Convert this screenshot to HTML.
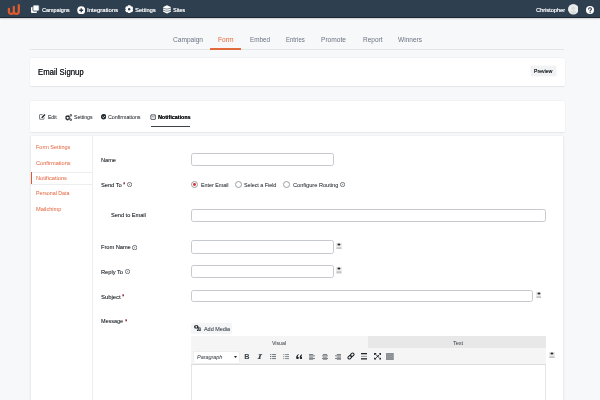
<!DOCTYPE html>
<html><head><meta charset="utf-8"><style>
*{margin:0;padding:0;box-sizing:border-box}
html,body{width:600px;height:400px;overflow:hidden;background:#f7f8fa;font-family:"Liberation Sans",sans-serif;position:relative}
#root{position:absolute;left:0;top:0;width:600px;height:400px;will-change:transform;overflow:hidden;filter:blur(0.2px)}
.a{position:absolute;white-space:nowrap;line-height:1}
#nav{position:absolute;left:0;top:0;width:600px;height:18.2px;background:#2e3f4f;border-bottom:1.1px solid #1b2432;box-shadow:0 0.6px 1.2px rgba(0,0,0,.18)}
.nt{color:#eef0f2;text-shadow:0.15px 0 0 #eef0f2}
.st{color:#6b7380}
.st.on{color:#e4683a}
.es{color:#1d2327;text-shadow:0.1px 0 0 #1d2327}
.pv{color:#1d2327;text-shadow:0.12px 0 0 #1d2327}
.card{position:absolute;background:#fff;border-radius:1.5px;box-shadow:0 0 0 0.4px rgba(0,0,0,.04),0 0.6px 1.2px rgba(0,0,0,.06)}
.tt{color:#2c3338;text-shadow:0.2px 0 0 rgba(44,51,56,.3)}
.tt.b{color:#101517;font-weight:bold;text-shadow:0.2px 0 0 #101517}
.sb{color:#e2623a}
.lb{color:#1d2327;text-shadow:0.2px 0 0 rgba(29,35,39,.45)}
.req{color:#b32d2e}
.inp{position:absolute;border:1.15px solid #c6c9cd;border-radius:2.5px;background:#fff}
.rl{color:#2c3338;text-shadow:0.2px 0 0 rgba(44,51,56,.3)}
.radio{position:absolute;width:7px;height:7px;border:0.9px solid #9a9da1;border-radius:50%;background:#fff}
</style></head><body><div id="root">
<div id="nav"></div>
<svg class="a" style="left:0;top:0" width="30" height="18" viewBox="0 0 30 18">
<path d="M8.9 9V11.2Q8.9 13.85 11.35 13.85Q13.8 13.85 13.8 11.2V7 M13.8 11.2Q13.8 13.85 16.3 13.85Q18.8 13.85 18.8 11.2V5.2" fill="none" stroke="#dd5a2c" stroke-width="2.3" stroke-linecap="round" stroke-linejoin="round"/></svg>
<svg class="a" style="left:31.4px;top:5.4px" width="8.2" height="8" viewBox="0 0 8.2 8">
<rect x="0" y="2" width="6" height="6" rx="0.9" fill="#fff"/>
<rect x="1.9" y="0" width="6.3" height="6.1" rx="1" fill="#fff" stroke="#2e3f4f" stroke-width="0.8"/></svg>
<div class="a nt" style="left:41.70px;top:7.99px;font-size:5.600px;transform:scaleX(0.9709);transform-origin:0 0;">Campaigns</div>
<svg class="a" style="left:76.5px;top:5.8px" width="8.5" height="8.5" viewBox="0 0 8.5 8.5">
<circle cx="4.25" cy="4.25" r="4" fill="#fff"/><path d="M4.25 2.3V6.2M2.3 4.25H6.2" stroke="#2c3a4a" stroke-width="1.3"/></svg>
<div class="a nt" style="left:87.00px;top:7.99px;font-size:5.600px;transform:scaleX(1.0593);transform-origin:0 0;">Integrations</div>
<svg class="a" style="left:124.5px;top:4.8px" width="8.4" height="8.4" viewBox="0 0 10 10">
<path fill="#fff" fill-rule="evenodd" d="M6.91 8.40 L6.45 9.78 L3.55 9.78 L3.09 8.40 L3.01 8.35 L1.58 8.65 L0.13 6.14 L1.10 5.05 L1.10 4.95 L0.13 3.86 L1.58 1.35 L3.01 1.65 L3.09 1.60 L3.55 0.22 L6.45 0.22 L6.91 1.60 L6.99 1.65 L8.42 1.35 L9.87 3.86 L8.90 4.95 L8.90 5.05 L9.87 6.14 L8.42 8.65 L6.99 8.35Z M6.5 5A1.5 1.5 0 1 0 3.5 5A1.5 1.5 0 1 0 6.5 5Z"/></svg>
<div class="a nt" style="left:135.20px;top:7.99px;font-size:5.600px;transform:scaleX(1.0181);transform-origin:0 0;">Settings</div>
<svg class="a" style="left:162.8px;top:4.9px" width="8" height="8.8" viewBox="0 0 8 8.8">
<path d="M4 0.2L7.8 2V6.8L4 8.6L0.2 6.8V2Z" fill="#fff"/>
<path d="M0.2 3.2Q4 5.2 7.8 3.2M0.2 5.3Q4 7.3 7.8 5.3" fill="none" stroke="#2e3f4f" stroke-width="0.6"/></svg>
<div class="a nt" style="left:172.50px;top:7.99px;font-size:5.600px;transform:scaleX(0.9720);transform-origin:0 0;">Sites</div>
<div class="a nt" style="left:535.80px;top:7.99px;font-size:5.600px;transform:scaleX(1.0053);transform-origin:0 0;">Christopher</div>
<svg class="a" style="left:567.6px;top:4px" width="10.6" height="10.6" viewBox="0 0 10 10">
<circle cx="5" cy="5" r="5" fill="#ebecec"/><circle cx="5" cy="3.9" r="1.8" fill="#dcdede"/><path d="M1.9 8.4Q2.6 5.9 5 5.9Q7.4 5.9 8.1 8.4Q5 10.6 1.9 8.4Z" fill="#dcdede"/></svg>
<svg class="a" style="left:585.6px;top:5.5px" width="8" height="8" viewBox="0 0 10 10">
<circle cx="5" cy="5" r="5" fill="#fff"/><path d="M3.3 3.9Q3.3 2.2 5 2.2Q6.8 2.2 6.8 3.8Q6.8 4.8 5.7 5.3Q5.1 5.6 5.1 6.2" fill="none" stroke="#2a3542" stroke-width="1.35" stroke-linecap="round"/><circle cx="5.1" cy="7.9" r="0.8" fill="#2a3542"/></svg>
<div class="a st" style="left:173.00px;top:36.34px;font-size:7.000px;transform:scaleX(0.9403);transform-origin:0 0;">Campaign</div>
<div class="a st on" style="left:218.00px;top:36.34px;font-size:7.000px;transform:scaleX(0.9491);transform-origin:0 0;">Form</div>
<div class="a st" style="left:249.50px;top:36.34px;font-size:7.000px;transform:scaleX(0.9019);transform-origin:0 0;">Embed</div>
<div class="a st" style="left:286.25px;top:36.34px;font-size:7.000px;transform:scaleX(0.8607);transform-origin:0 0;">Entries</div>
<div class="a st" style="left:321.25px;top:36.34px;font-size:7.000px;transform:scaleX(0.9451);transform-origin:0 0;">Promote</div>
<div class="a st" style="left:362.50px;top:36.34px;font-size:7.000px;transform:scaleX(0.9283);transform-origin:0 0;">Report</div>
<div class="a st" style="left:398.00px;top:36.34px;font-size:7.000px;transform:scaleX(0.9347);transform-origin:0 0;">Winners</div>
<div class="a" style="left:30px;top:48.6px;width:534px;height:1px;background:#e4e6e9"></div>
<div class="a" style="left:210.3px;top:48px;width:31px;height:1.7px;background:#e36a3c"></div>
<div class="card" style="left:30px;top:57.5px;width:535px;height:28px"></div>
<div class="a es" style="left:38.30px;top:69.10px;font-size:8.144px;transform:scaleX(0.9524);transform-origin:0 0;">Email Signup</div>
<div class="a" style="left:530.6px;top:66px;width:25.4px;height:10.3px;background:#f1f2f3;border-radius:1.5px;box-shadow:0 0 0 0.3px #e6e7e9"></div>
<div class="a pv" style="left:534.00px;top:69.13px;font-size:5.300px;transform:scaleX(0.9699);transform-origin:0 0;">Preview</div>
<div class="card" style="left:30px;top:101px;width:535px;height:30.5px"></div>
<div class="a tt" style="left:48.00px;top:115.30px;font-size:5.800px;transform:scaleX(0.8706);transform-origin:0 0;">Edit</div>
<div class="a tt" style="left:74.00px;top:115.30px;font-size:5.800px;transform:scaleX(0.8828);transform-origin:0 0;">Settings</div>
<div class="a tt" style="left:107.50px;top:115.30px;font-size:5.800px;transform:scaleX(0.9083);transform-origin:0 0;">Confirmations</div>
<div class="a tt b" style="left:157.50px;top:115.39px;font-size:5.600px;transform:scaleX(0.9583);transform-origin:0 0;">Notifications</div>
<div class="a" style="left:150.8px;top:125.8px;width:39.2px;height:1.5px;background:#3c434a"></div>
<svg class="a" style="left:38.6px;top:114.2px" width="7.4" height="5.8" viewBox="0 0 13 10">
<path d="M6.5 1H1.6a.7.7 0 0 0-.7.7V8.4a.7.7 0 0 0 .7.7H8.2a.7.7 0 0 0 .7-.7V6" fill="none" stroke="#50575e" stroke-width="1.3"/>
<path d="M4.2 6.9L4.6 5.2L9.8 0L11.4 1.6L6.2 6.8Z" fill="#1d2327"/></svg>
<svg class="a" style="left:64.8px;top:113.9px" width="7.6" height="7" viewBox="0 0 15 14">
<circle cx="5.2" cy="7.6" r="3.3" fill="none" stroke="#1d2327" stroke-width="2.2"/>
<circle cx="5.2" cy="7.6" r="4.6" fill="none" stroke="#1d2327" stroke-width="1.6" stroke-dasharray="1.6 1.3"/>
<circle cx="11.6" cy="2.6" r="1.7" fill="none" stroke="#1d2327" stroke-width="1.6"/>
<circle cx="11.6" cy="11.4" r="1.7" fill="none" stroke="#1d2327" stroke-width="1.6"/></svg>
<svg class="a" style="left:101px;top:114.3px" width="5.4" height="5.4" viewBox="0 0 10 10">
<circle cx="5" cy="5" r="5" fill="#23282d"/><path d="M2.6 5.2L4.3 6.8L7.4 3.5" fill="none" stroke="#fff" stroke-width="1.5"/></svg>
<svg class="a" style="left:150px;top:114px" width="6" height="6" viewBox="0 0 6 6">
<rect x="0.85" y="0.85" width="4.5" height="4.5" rx="0.3" fill="none" stroke="#3c434a" stroke-width="0.85"/><path d="M1.6 1.9L3.1 3.2L4.6 1.9" fill="none" stroke="#3c434a" stroke-width="0.6"/></svg>
<div class="card" style="left:30px;top:135.5px;width:534px;height:270px"></div>
<div class="a" style="left:30px;top:135.5px;width:1.4px;height:270px;background:#eceef0"></div>
<div class="a" style="left:92px;top:135.5px;width:1.4px;height:270px;background:#eceef0"></div>
<div class="a" style="left:563px;top:135.5px;width:1px;height:270px;background:#eceef0"></div>
<div class="a" style="left:31.4px;top:171.5px;width:60.6px;height:1px;background:#eceef0"></div>
<div class="a" style="left:31.4px;top:184.3px;width:60.6px;height:1px;background:#eceef0"></div>
<div class="a" style="left:31px;top:171.7px;width:1.4px;height:12.6px;background:#e5572e"></div>
<div class="a sb" style="left:36.00px;top:144.06px;font-size:6.100px;transform:scaleX(0.9034);transform-origin:0 0;">Form Settings</div>
<div class="a sb" style="left:36.00px;top:160.36px;font-size:6.100px;transform:scaleX(0.9221);transform-origin:0 0;">Confirmations</div>
<div class="a sb" style="left:36.00px;top:175.36px;font-size:6.100px;transform:scaleX(0.9330);transform-origin:0 0;">Notifications</div>
<div class="a sb" style="left:36.00px;top:190.26px;font-size:6.100px;transform:scaleX(0.8665);transform-origin:0 0;">Personal Data</div>
<div class="a sb" style="left:36.00px;top:206.16px;font-size:6.100px;transform:scaleX(0.9288);transform-origin:0 0;">Mailchimp</div>
<div class="a lb" style="left:101.30px;top:158.25px;font-size:5.900px;transform:scaleX(0.9466);transform-origin:0 0;">Name</div>
<div class="a lb" style="left:101.20px;top:182.65px;font-size:5.900px;transform:scaleX(0.9656);transform-origin:0 0;">Send To</div>
<div class="a lb" style="left:110.60px;top:213.05px;font-size:5.900px;transform:scaleX(0.9474);transform-origin:0 0;">Send to Email</div>
<div class="a lb" style="left:101.00px;top:244.65px;font-size:5.900px;transform:scaleX(0.9570);transform-origin:0 0;">From Name</div>
<div class="a lb" style="left:101.00px;top:269.55px;font-size:5.900px;transform:scaleX(0.9628);transform-origin:0 0;">Reply To</div>
<div class="a lb" style="left:101.00px;top:294.95px;font-size:5.900px;transform:scaleX(0.9961);transform-origin:0 0;">Subject</div>
<div class="a lb" style="left:101.00px;top:319.45px;font-size:5.900px;transform:scaleX(0.9189);transform-origin:0 0;">Message</div>
<svg class="a" style="left:122.70px;top:182.20px" width="2.6" height="2.6" viewBox="0 0 10 10"><path d="M5 0.5V9.5M1.1 2.75L8.9 7.25M8.9 2.75L1.1 7.25" stroke="#8a2430" stroke-width="2.6"/></svg>
<svg class="a" style="left:121.80px;top:294.40px" width="2.6" height="2.6" viewBox="0 0 10 10"><path d="M5 0.5V9.5M1.1 2.75L8.9 7.25M8.9 2.75L1.1 7.25" stroke="#8a2430" stroke-width="2.6"/></svg>
<svg class="a" style="left:124.80px;top:319.40px" width="2.6" height="2.6" viewBox="0 0 10 10"><path d="M5 0.5V9.5M1.1 2.75L8.9 7.25M8.9 2.75L1.1 7.25" stroke="#8a2430" stroke-width="2.6"/></svg>
<svg class="a" style="left:126.95px;top:181.95px" width="5.1" height="5.1" viewBox="0 0 10 10"><circle cx="5" cy="5" r="4.25" fill="none" stroke="#50575e" stroke-width="1.5"/><path d="M4.2 3L6.6 5L4.2 7Z" fill="#8c8f94"/></svg>
<svg class="a" style="left:132.15px;top:244.55px" width="5.3" height="5.3" viewBox="0 0 10 10"><circle cx="5" cy="5" r="4.25" fill="none" stroke="#50575e" stroke-width="1.5"/><path d="M4.2 3L6.6 5L4.2 7Z" fill="#8c8f94"/></svg>
<svg class="a" style="left:124.55px;top:269.15px" width="5.1" height="5.1" viewBox="0 0 10 10"><circle cx="5" cy="5" r="4.25" fill="none" stroke="#50575e" stroke-width="1.5"/><path d="M4.2 3L6.6 5L4.2 7Z" fill="#8c8f94"/></svg>
<svg class="a" style="left:339.95px;top:181.85px" width="5.1" height="5.1" viewBox="0 0 10 10"><circle cx="5" cy="5" r="4.25" fill="none" stroke="#50575e" stroke-width="1.5"/><path d="M4.2 3L6.6 5L4.2 7Z" fill="#8c8f94"/></svg>
<div class="inp" style="left:191px;top:153.4px;width:142.5px;height:12.400000000000006px"></div>
<div class="inp" style="left:191px;top:209.4px;width:355.4px;height:12.199999999999989px"></div>
<div class="inp" style="left:191px;top:240.3px;width:143px;height:13.299999999999983px"></div>
<div class="inp" style="left:191px;top:265px;width:143px;height:13px"></div>
<div class="inp" style="left:191px;top:289.5px;width:342.29999999999995px;height:12.5px"></div>
<div class="radio" style="left:191.00px;top:181.10px"></div>
<div class="a" style="left:193.10px;top:183.20px;width:2.8px;height:2.8px;border-radius:50%;background:#d63638"></div>
<div class="a rl" style="left:201.00px;top:181.90px;font-size:6.000px;transform:scaleX(0.8867);transform-origin:0 0;">Enter Email</div>
<div class="radio" style="left:235.00px;top:181.30px"></div>
<div class="a rl" style="left:244.20px;top:181.90px;font-size:6.000px;transform:scaleX(0.8885);transform-origin:0 0;">Select a Field</div>
<div class="radio" style="left:283.00px;top:181.30px"></div>
<div class="a rl" style="left:293.00px;top:181.90px;font-size:6.000px;transform:scaleX(0.9366);transform-origin:0 0;">Configure Routing</div>
<svg class="a" style="left:336.1px;top:242.8px" width="5.9" height="6.6" viewBox="0 0 10 11.5"><rect x="0" y="0" width="10" height="5.2" fill="#e4e4e4"/><ellipse cx="5" cy="2.7" rx="2.5" ry="1.7" fill="#23282d"/><rect x="0" y="5.2" width="10" height="6.3" fill="#ededed"/><rect x="0.8" y="7.0" width="8.4" height="1.1" fill="#bdbfc2"/><rect x="0.8" y="9.4" width="8.4" height="1.4" fill="#a9acaf"/></svg>
<svg class="a" style="left:336.1px;top:267.1px" width="5.9" height="6.6" viewBox="0 0 10 11.5"><rect x="0" y="0" width="10" height="5.2" fill="#e4e4e4"/><ellipse cx="5" cy="2.7" rx="2.5" ry="1.7" fill="#23282d"/><rect x="0" y="5.2" width="10" height="6.3" fill="#ededed"/><rect x="0.8" y="7.0" width="8.4" height="1.1" fill="#bdbfc2"/><rect x="0.8" y="9.4" width="8.4" height="1.4" fill="#a9acaf"/></svg>
<svg class="a" style="left:535.6px;top:291.8px" width="5.9" height="6.6" viewBox="0 0 10 11.5"><rect x="0" y="0" width="10" height="5.2" fill="#e4e4e4"/><ellipse cx="5" cy="2.7" rx="2.5" ry="1.7" fill="#23282d"/><rect x="0" y="5.2" width="10" height="6.3" fill="#ededed"/><rect x="0.8" y="7.0" width="8.4" height="1.1" fill="#bdbfc2"/><rect x="0.8" y="9.4" width="8.4" height="1.4" fill="#a9acaf"/></svg>
<svg class="a" style="left:549.4px;top:351.5px" width="5.9" height="6.6" viewBox="0 0 10 11.5"><rect x="0" y="0" width="10" height="5.2" fill="#e4e4e4"/><ellipse cx="5" cy="2.7" rx="2.5" ry="1.7" fill="#23282d"/><rect x="0" y="5.2" width="10" height="6.3" fill="#ededed"/><rect x="0.8" y="7.0" width="8.4" height="1.1" fill="#bdbfc2"/><rect x="0.8" y="9.4" width="8.4" height="1.4" fill="#a9acaf"/></svg>
<div class="a" style="left:191.2px;top:323.3px;width:41.3px;height:10.3px;background:#f3f5f6;border-radius:1.5px"></div>
<svg class="a" style="left:193.7px;top:325.3px" width="7" height="6.2" viewBox="0 0 11 10">
<path d="M0.3 2.2Q0.3 0.3 2.2 0.3H5Q6.9 0.3 6.9 2.2V5.6H2.2Q0.3 5.6 0.3 3.7Z" fill="#1d2327"/><circle cx="3.5" cy="3" r="1.4" fill="#f3f5f6"/>
<path d="M6.2 4H10.4V8.6H9.2V5.2H7.4V8.8H6.2Z" fill="#1d2327"/>
<circle cx="5.8" cy="8.7" r="1.25" fill="#1d2327"/><circle cx="9.4" cy="8.6" r="1.25" fill="#1d2327"/></svg>
<div class="a rl" style="left:204.00px;top:326.75px;font-size:5.900px;transform:scaleX(0.9215);transform-origin:0 0;color:#3c434a">Add Media</div>
<div class="a" style="left:191px;top:336.4px;width:355px;height:70px;border:1px solid #e4e6e8;background:#fff"></div>
<div class="a" style="left:191px;top:336.4px;width:177px;height:11.5px;background:#f5f5f5"></div>
<div class="a" style="left:368px;top:336.4px;width:178px;height:11.5px;background:#e8e8e8"></div>
<div class="a" style="left:191px;top:347.9px;width:355px;height:17.2px;background:#f5f5f5;border-bottom:1px solid #dcdcde"></div>
<div class="a rl" style="left:272.40px;top:341.09px;font-size:5.600px;transform:scaleX(0.9239);transform-origin:0 0;color:#50575e">Visual</div>
<div class="a rl" style="left:452.60px;top:341.09px;font-size:5.600px;transform:scaleX(0.9737);transform-origin:0 0;color:#50575e">Text</div>
<div class="a" style="left:193.7px;top:351.8px;width:45.5px;height:10.9px;background:#fff;box-shadow:0 0 0 0.4px #e4e5e7"></div>
<div class="a rl" style="left:197.20px;top:354.10px;font-size:6.000px;transform:scaleX(0.9065);transform-origin:0 0;color:#50575e;font-style:italic">Paragraph</div>
<svg class="a" style="left:233.5px;top:355.8px" width="3" height="2.2" viewBox="0 0 3 2"><path d="M0 0H3L1.5 2Z" fill="#23282d"/></svg>
<div class="a" style="left:244.3px;top:353.4px;font-size:7.3px;font-weight:bold;color:#3c434a">B</div>
<svg class="a" style="left:257px;top:353.9px" width="5.6" height="5.6" viewBox="0 0 10 10">
<path d="M3.2 0.4H9.4L9.1 1.9H7.5L5.4 8.1H7L6.7 9.6H0.6L0.9 8.1H2.5L4.6 1.9H3Z" fill="#3c434a"/></svg>
<svg class="a" style="left:270px;top:354px" width="6" height="6" viewBox="0 0 6 6"><rect x="0" y="0" width="1.3" height="1.1" fill="#7b8086"/><rect x="2.1" y="0" width="3.9" height="1.1" fill="#7b8086"/><rect x="0" y="2" width="1.3" height="1.1" fill="#7b8086"/><rect x="2.1" y="2" width="3.9" height="1.1" fill="#7b8086"/><rect x="0" y="4" width="1.3" height="1.1" fill="#7b8086"/><rect x="2.1" y="4" width="3.9" height="1.1" fill="#7b8086"/></svg>
<svg class="a" style="left:283.2px;top:354px" width="6" height="6" viewBox="0 0 6 6"><rect x="0" y="0" width="1.3" height="1.1" fill="#a4a8ac"/><rect x="2.1" y="0" width="3.9" height="1.1" fill="#8d9196"/><rect x="0" y="2" width="1.3" height="1.1" fill="#a4a8ac"/><rect x="2.1" y="2" width="3.9" height="1.1" fill="#8d9196"/><rect x="0" y="4" width="1.3" height="1.1" fill="#a4a8ac"/><rect x="2.1" y="4" width="3.9" height="1.1" fill="#8d9196"/></svg>
<svg class="a" style="left:295.9px;top:353.9px" width="6.6" height="5.3" viewBox="0 0 13 10.4">
<path d="M5.4 0.3C2.4 1.2 0.3 3.6 0.3 6.9C0.3 9.1 1.5 10.2 3 10.2C4.4 10.2 5.5 9.2 5.5 7.8C5.5 6.4 4.5 5.6 3.3 5.6C3.4 3.8 4.4 2.4 6 1.6Z M12.4 0.3C9.4 1.2 7.3 3.6 7.3 6.9C7.3 9.1 8.5 10.2 10 10.2C11.4 10.2 12.5 9.2 12.5 7.8C12.5 6.4 11.5 5.6 10.3 5.6C10.4 3.8 11.4 2.4 13 1.6Z" fill="#1d2327"/></svg>
<svg class="a" style="left:308.8px;top:353.6px" width="6" height="6.6" viewBox="0 0 6 6.6"><rect x="0" y="0.00" width="4.2" height="1.0" fill="#7d8287"/><rect x="0" y="1.32" width="6" height="1.0" fill="#7d8287"/><rect x="0" y="2.64" width="4.2" height="1.0" fill="#7d8287"/><rect x="0" y="3.96" width="6" height="1.0" fill="#7d8287"/><rect x="0" y="5.28" width="4.2" height="1.0" fill="#7d8287"/></svg>
<svg class="a" style="left:322px;top:353.6px" width="6" height="6.6" viewBox="0 0 6 6.6"><rect x="0.8999999999999999" y="0.00" width="4.2" height="1.0" fill="#7d8287"/><rect x="0.0" y="1.32" width="6" height="1.0" fill="#7d8287"/><rect x="0.8999999999999999" y="2.64" width="4.2" height="1.0" fill="#7d8287"/><rect x="0.0" y="3.96" width="6" height="1.0" fill="#7d8287"/><rect x="0.8999999999999999" y="5.28" width="4.2" height="1.0" fill="#7d8287"/></svg>
<svg class="a" style="left:335px;top:353.6px" width="6" height="6.6" viewBox="0 0 6 6.6"><rect x="1.7999999999999998" y="0.00" width="4.2" height="1.0" fill="#7d8287"/><rect x="0" y="1.32" width="6" height="1.0" fill="#7d8287"/><rect x="1.7999999999999998" y="2.64" width="4.2" height="1.0" fill="#7d8287"/><rect x="0" y="3.96" width="6" height="1.0" fill="#7d8287"/><rect x="1.7999999999999998" y="5.28" width="4.2" height="1.0" fill="#7d8287"/></svg>
<svg class="a" style="left:347.3px;top:352.4px" width="8" height="8" viewBox="0 0 10 10">
<g transform="rotate(-45 5 5)"><rect x="0.4" y="3.3" width="5" height="3.4" rx="1.7" fill="none" stroke="#1d2327" stroke-width="1.25"/><rect x="4.6" y="3.3" width="5" height="3.4" rx="1.7" fill="none" stroke="#1d2327" stroke-width="1.25"/></g></svg>
<svg class="a" style="left:361px;top:353px" width="6.2" height="6.5" viewBox="0 0 6.2 6.5">
<rect x="0" y="0" width="6.2" height="1.3" fill="#1d2327"/><rect x="0" y="2.9" width="6.2" height="0.7" fill="#6b7075"/><rect x="0" y="5.2" width="6.2" height="1.3" fill="#1d2327"/></svg>
<svg class="a" style="left:373.5px;top:353px" width="7.5" height="6.6" viewBox="0 0 10 9">
<path d="M2.8 2.5L7.2 6.5M7.2 2.5L2.8 6.5" stroke="#1d2327" stroke-width="1.3"/><path d="M0 0H2.8L2.8 1.4L1.4 2.6L0 2.6Z M10 0H7.2L7.2 1.4L8.6 2.6L10 2.6Z M0 9H2.8L2.8 7.6L1.4 6.4L0 6.4Z M10 9H7.2L7.2 7.6L8.6 6.4L10 6.4Z" fill="#1d2327"/></svg>
<svg class="a" style="left:386.2px;top:352.8px" width="7.8" height="7" viewBox="0 0 10 9">
<rect x="0" y="0" width="10" height="9" fill="#8c8f93"/><path d="M1.3 2.3H8.7M1.3 4.5H8.7M1.3 6.7H8.7" stroke="#9fa2a6" stroke-width="0.6"/></svg>
</div></body></html>
